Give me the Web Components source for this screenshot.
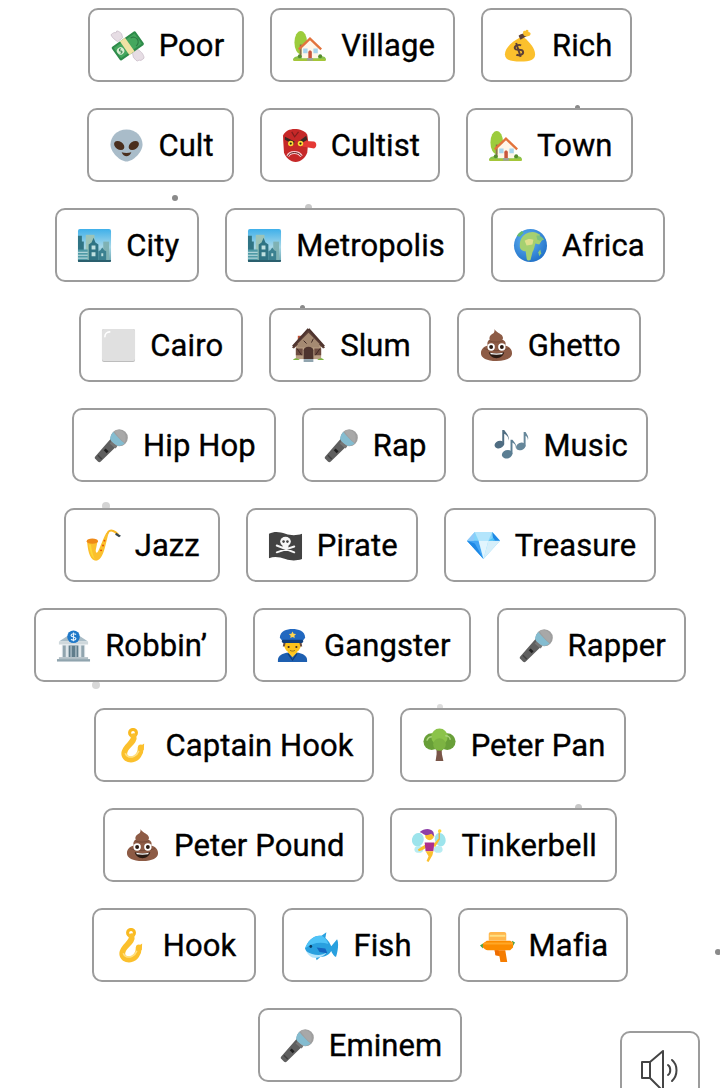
<!DOCTYPE html>
<html lang="en">
<head>
<meta charset="utf-8">
<title>Crafts</title>
<style>
html, body { margin: 0; padding: 0; background: #fff; height: 1088px; overflow: hidden; }
</style>
</head>
<body>
<craft-board>
  <craft-dot x="175" y="198" size="6" tone="#8a8a8a"></craft-dot>
  <craft-dot x="577" y="107" size="5" tone="#8a8a8a"></craft-dot>
  <craft-dot x="308" y="207" size="7" tone="#c8c8c8"></craft-dot>
  <craft-dot x="302" y="307" size="5" tone="#8a8a8a"></craft-dot>
  <craft-dot x="106" y="506" size="8" tone="#d4d4d4"></craft-dot>
  <craft-dot x="96" y="685" size="8" tone="#d8d8d8"></craft-dot>
  <craft-dot x="440" y="707" size="6" tone="#dcdcdc"></craft-dot>
  <craft-dot x="578" y="807" size="7" tone="#c8c8c8"></craft-dot>
  <craft-dot x="718" y="952" size="6" tone="#8a8a8a"></craft-dot>

  <craft-row>
    <craft-chip icon="money">Poor</craft-chip>
    <craft-chip icon="house">Village</craft-chip>
    <craft-chip icon="bag">Rich</craft-chip>
  </craft-row>
  <craft-row>
    <craft-chip icon="alien">Cult</craft-chip>
    <craft-chip icon="goblin">Cultist</craft-chip>
    <craft-chip icon="house">Town</craft-chip>
  </craft-row>
  <craft-row>
    <craft-chip icon="city">City</craft-chip>
    <craft-chip icon="city">Metropolis</craft-chip>
    <craft-chip icon="globe">Africa</craft-chip>
  </craft-row>
  <craft-row>
    <craft-chip icon="square">Cairo</craft-chip>
    <craft-chip icon="derelict">Slum</craft-chip>
    <craft-chip icon="poop">Ghetto</craft-chip>
  </craft-row>
  <craft-row>
    <craft-chip icon="mic">Hip Hop</craft-chip>
    <craft-chip icon="mic">Rap</craft-chip>
    <craft-chip icon="notes">Music</craft-chip>
  </craft-row>
  <craft-row>
    <craft-chip icon="sax">Jazz</craft-chip>
    <craft-chip icon="flag">Pirate</craft-chip>
    <craft-chip icon="gem">Treasure</craft-chip>
  </craft-row>
  <craft-row>
    <craft-chip icon="bank">Robbin’</craft-chip>
    <craft-chip icon="officer">Gangster</craft-chip>
    <craft-chip icon="mic">Rapper</craft-chip>
  </craft-row>
  <craft-row>
    <craft-chip icon="hook">Captain Hook</craft-chip>
    <craft-chip icon="tree">Peter Pan</craft-chip>
  </craft-row>
  <craft-row>
    <craft-chip icon="poop">Peter Pound</craft-chip>
    <craft-chip icon="fairy">Tinkerbell</craft-chip>
  </craft-row>
  <craft-row>
    <craft-chip icon="hook">Hook</craft-chip>
    <craft-chip icon="fish">Fish</craft-chip>
    <craft-chip icon="pistol">Mafia</craft-chip>
  </craft-row>
  <craft-row>
    <craft-chip icon="mic">Eminem</craft-chip>
  </craft-row>

  <sound-button></sound-button>
</craft-board>

<script>
// all emoji drawn on a 36x36 box
const ICONS = {
  money: `
    <g fill="#e6dde4" stroke="#c4b6c2" stroke-width=".7">
      <path d="M1 7c2-2 4-3 5-2l1-2c2 0 4 2 5 3l1 4-5 4C6 13 2 10 1 7z"/>
      <path d="M35 31c-2 2-4 3-5 2l-2 1c-2-1-3-3-4-4l-1-5 5-3c3 1 7 5 7 9z"/>
    </g>
    <g transform="rotate(-35 18 18)">
      <rect x="3" y="10" width="30" height="17" rx="1.500" fill="#2e8b4a"/>
      <rect x="5" y="12" width="26" height="13" fill="#45a75e"/>
      <rect x="14" y="10" width="6.500" height="17" fill="#f1e2a4"/>
      <circle cx="9" cy="18.500" r="3.800" fill="#d7ecd0"/>
      <path d="M10.500 16.800c-2-1-3 1-1.500 1.800s.5 2.800-1.500 1.800" fill="none" stroke="#2e7d46" stroke-width="1"/>
      <path d="M25 13.500a5 5 0 0 1 0 10" fill="none" stroke="#2e7d46" stroke-width="1.200"/>
    </g>`,
  house: `
    <ellipse cx="9" cy="15" rx="6.500" ry="12" fill="#9ccc3c"/>
    <path d="M8 17h2v12H8z" fill="#8d6e4f"/>
    <path d="M1 33c0-3 3-4 6-4h23c3 0 5 1 5 4z" fill="#8bc34a"/>
    <path d="M2 34c-1 0-1-1 0-2h32c1 1 1 2 0 2z" fill="#a4c639"/>
    <path d="M10 20l8.500-8L27 20v11H10z" fill="#fff6e8"/>
    <path d="M7 22l11.500-11L30 22" fill="none" stroke="#e2733c" stroke-width="2.400"/>
    <path d="M11.500 21h4.500v5h-4.500zM22 21h4.500v5H22z" fill="#a6d4ee"/>
    <path d="M16.800 31v-6c0-2.600 3.600-2.600 3.600 0v6z" fill="#c8553d"/>
    <path d="M15.500 31h6v2.500h-6z" fill="#9e9e9e"/>
    <circle cx="8" cy="29" r="2" fill="#558b2f"/><circle cx="29" cy="29" r="2" fill="#558b2f"/>`,
  bag: `
    <path d="M17 10C9 14 2 21 2 27c0 6 6 7.500 16 7.500S33 33 33 27c0-6-6-13-11-17z" fill="#fbc02d"/>
    <path d="M16 8c2-2 6-2.500 8-3l1 3-7 4z" fill="#5d4037"/>
    <path d="M21 7c-1-3 0-5 2-4 1-2 4-1 3 1 3 0 3 3 1 4-2 1-5 1-6-1z" fill="#fbc02d"/>
    <g transform="rotate(-18 16 23)" fill="none" stroke="#5d4037" stroke-width="2">
      <path d="M20 19c-1.500-2-7-2-7 1s7 2 7 5.500-6 3-7.500 1"/><path d="M16 15v15"/>
    </g>`,
  alien: `
    <path d="M18 1.500C8 1.500 1.500 9 1.500 17c0 8 10 17.500 16.500 17.500S34.500 25 34.500 17C34.500 9 28 1.500 18 1.500z" fill="#a9bcc9"/>
    <ellipse cx="10.500" cy="18" rx="5.800" ry="4" transform="rotate(35 10.500 18)" fill="#4a2f1e"/>
    <ellipse cx="25.500" cy="18" rx="5.800" ry="4" transform="rotate(-35 25.500 18)" fill="#4a2f1e"/>
    <path d="M13 25c3 1 7 1 10 0-1 3-3 4-5 4s-4-1-5-4z" fill="#4a2f1e"/>`,
  goblin: `
    <path d="M1 8C3 3 8 1 13 1s11 2 13 6l1 7-1 11c-1 5-7 10-12 10S3 30 2 25z" fill="#c62828"/>
    <path d="M19 13l14 1c3 1 3 6 0 7l-12-2z" fill="#e53935"/>
    <path d="M3 9l10 5-1 3-9-5zM25 8l-8 6 1 3 8-5z" fill="#3e2723"/>
    <circle cx="9" cy="16" r="2.800" fill="#fdd835"/><circle cx="19" cy="16" r="2.800" fill="#fdd835"/>
    <circle cx="9" cy="16" r="1.100" fill="#212121"/><circle cx="19" cy="16" r="1.100" fill="#212121"/>
    <path d="M6 29c2-5 11-5 14 0" fill="none" stroke="#ffcdd2" stroke-width="3"/>
    <path d="M6 29c2-5 11-5 14 0" fill="none" stroke="#4e1510" stroke-width="1"/>
    <path d="M10 4l3 5 4-5" fill="none" stroke="#7f1d1d" stroke-width="1.200"/>`,
  city: `
    <defs><linearGradient id="sky" x1="0" y1="0" x2="0" y2="1">
      <stop offset="0" stop-color="#3fb0ea"/><stop offset=".55" stop-color="#a8d8e8"/><stop offset="1" stop-color="#6aa5b0"/>
    </linearGradient></defs>
    <rect x="1" y="1" width="34" height="34" rx="2" fill="url(#sky)"/>
    <path d="M9 7h9v27H9z" fill="#9cc4b8"/>
    <path d="M27 14h6v20h-6z" fill="#7fb2b4"/>
    <path d="M1 8h4v6h2v21H2a1 1 0 0 1-1-1z" fill="#2f7484"/>
    <path d="M1 22h10v13H2a1 1 0 0 1-1-1z" fill="#4f9aa6"/>
    <path d="M1 25h10M1 28h10M1 31h10" stroke="#c8e4e6" stroke-width="1"/>
    <path d="M12 35V17l3-2 2-5 2 5 3 2v18z" fill="#2f7484"/>
    <path d="M15 18h4v4h-4zM15 25h4v4h-4z" fill="#bfe0e0"/>
    <path d="M22 35V24l2-1 2-3 2 3 2 1v11z" fill="#3b8090"/>
    <path d="M25 26h2v3h-2z" fill="#bfe0e0"/>
    <path d="M1 33h34v1a1 1 0 0 1-1 1H2a1 1 0 0 1-1-1z" fill="#2a5f6e"/>`,
  globe: `
    <defs><radialGradient id="sea" cx=".4" cy=".35" r=".8">
      <stop offset="0" stop-color="#64b5f6"/><stop offset="1" stop-color="#1565c0"/>
    </radialGradient></defs>
    <circle cx="18" cy="18" r="17" fill="url(#sea)"/>
    <path d="M8 12c2-5 7-8 12-8 3 0 5 1 8 3l-2 3 4 2-3 5-4-1c-1 3-1 6-3 9l-2 8c-2 1-4 0-4-2l-1-7c-3 0-6-2-6-5s0-5 1-7z" fill="#a5d070"/>
    <path d="M12 13c3-2 6-2 9-1l-1 5-6 1z" fill="#e0df8c"/>
    <path d="M4 8c1-2 3-4 5-5l2 2-4 4z" fill="#66bb6a"/>
    <path d="M24 8c3-1 6 1 8 4l-4 1-3-1z" fill="#7cc27e"/>
    <path d="M26 25l2-3 1 4-2 3z" fill="#8cc97a"/>`,
  square: `
    <rect x="1" y="1" width="34" height="34" rx="2" fill="#bdbdbd"/>
    <rect x="1" y="1" width="34" height="33" rx="2" fill="#e0e0e0"/>
    <path d="M4 9c0-3 2-5 5-5" fill="none" stroke="#fff" stroke-width="1.600" stroke-linecap="round"/>`,
  derelict: `
    <path d="M7 8h4v7H7z" fill="#c0553a"/>
    <path d="M5 16h26v16H5z" fill="#b99e84"/>
    <path d="M18 2L1 20l2 1L18 7l15 14 2-1z" fill="#5d4037"/>
    <path d="M18 5L7 16v4h22v-4z" fill="#a58a72"/>
    <path d="M18 1L2 19M18 1l16 18" stroke="#4e342e" stroke-width="2.400" fill="none"/>
    <path d="M13 32v-9c0-5 10-5 10 0v9z" fill="#4e342e"/>
    <path d="M5 21h7v7H5zM24 21h7v7h-7z" fill="#6d4c41"/>
    <path d="M6 21l5 7M30 21l-5 7M13 13l3 3M23 11l-2 4" stroke="#3e2723" stroke-width="1"/>
    <path d="M2 33c2-3 5-2 7 0zM27 33c2-2 5-3 7 0z" fill="#7cb342"/>
    <path d="M13 32h10v3H13z" fill="#90a4ae"/>`,
  poop: `
    <path d="M16 1c1 3 5 4 7 6 2 2 2 4 1 5 3 1 4 3 3 6 4 1 7 4 7 8 0 5-6 8-16 8S2 31 2 26c0-4 3-7 7-8-1-3 0-5 2-6-1-3 1-5 3-6 2-1 2-3 2-5z" fill="#8d5b45"/>
    <path d="M10 13c4 2 11 2 15 0M5 21c6 3 19 3 26 0" fill="none" stroke="#6f4533" stroke-width=".8"/>
    <circle cx="12.500" cy="19.500" r="3.800" fill="#fff"/><circle cx="23.500" cy="19.500" r="3.800" fill="#fff"/>
    <circle cx="12.500" cy="19.500" r="2" fill="#2a1a12"/><circle cx="23.500" cy="19.500" r="2" fill="#2a1a12"/>
    <path d="M10 25c5 1.500 11 1.500 16 0-1 4-4 6-8 6s-7-2-8-6z" fill="#2a1a12"/>
    <path d="M11.500 25.500c4 .8 9 .8 13 0l-.6 1.500c-4 .6-8 .6-11.800 0z" fill="#fff"/>`,
  mic: `
    <path d="M19 9l7 7L7 34.500c-1 1-2 1-3 0l-2.500-2.500c-1-1-1-2 0-3z" fill="#5f5f5f"/>
    <path d="M4 28l4 4" stroke="#424242" stroke-width="1.500"/>
    <path d="M12 21l3 3-2 2-3-3z" fill="#212121"/>
    <circle cx="26" cy="10" r="8.800" fill="#9e9e9e"/>
    <path d="M16.500 11c0-2 2-6 3.500-7 3 4 7 8 11.500 12-2 1.500-4 2.500-6.500 2.500l-2-1c-3-1-5.500-3.500-6.500-6.500z" fill="#84bcd0"/>
    <path d="M21 3c3-2 8-1 10 2s2 7 .5 10c-4-3-7.500-7.500-10.500-12z" fill="#a8a8a8"/>
    <path d="M18 14l6 5-2 2-6-5z" fill="#757575"/>`,
  notes: `
    <g fill="#4f6d82">
      <ellipse cx="5.500" cy="17" rx="5" ry="3.800" transform="rotate(-20 5.500 17)"/>
      <path d="M8.500 17h2V6c2 1 5 3 4 7 2-4-1-7-4-11h-2z"/>
    </g>
    <g fill="#5b7e93">
      <ellipse cx="13.500" cy="27" rx="5.500" ry="4.300" transform="rotate(-20 13.500 27)"/>
      <path d="M17 27h2V15c2 1 4 3 3 6 2-4-1-6-3-9h-2z"/>
    </g>
    <g fill="#66879a">
      <ellipse cx="27.500" cy="19" rx="5" ry="3.800" transform="rotate(-20 27.500 19)"/>
      <path d="M30.500 19h2V8c1 1 3 2 2 5 2-4-.5-6-2-9h-2z"/>
    </g>`,
  sax: `
    <path d="M1 13C2 22 3 31 9 33.500 15 35 18 26 20 18L23 6l-2-1C18 10 15 19 12.500 24c-1 2-2.500 2-2.500-1L12 13z" fill="#fbc02d"/>
    <path d="M3 17c1 6 2 12 6 15-2-4-3-9-4-15z" fill="#fdd835"/>
    <ellipse cx="6.500" cy="13.500" rx="5.800" ry="2.600" fill="#ef8a17"/>
    <path d="M22 6c1-3 3-4 6-3s4 3 5 4" fill="none" stroke="#f9b825" stroke-width="2.200"/>
    <path d="M31 5l5 3-2 1.500-4-2.500z" fill="#37474f"/>
    <circle cx="19" cy="13" r="1" fill="#e65100"/><circle cx="17.500" cy="18" r="1" fill="#e65100"/><circle cx="15.500" cy="23" r="1" fill="#e65100"/>`,
  flag: `
    <path d="M1 6c6-3 11-2 17 0s11 2 17 0v26c-6 2-11 2-17 0S7 29 1 31z" fill="#424242"/>
    <path d="M9 25l18-6M9 18l18 7" stroke="#f5f5f5" stroke-width="2" stroke-linecap="round"/>
    <ellipse cx="18" cy="14" rx="5.500" ry="5" fill="#f5f5f5"/>
    <rect x="15" y="17" width="6" height="4.500" rx="1" fill="#f5f5f5"/>
    <circle cx="16" cy="14" r="1.300" fill="#424242"/><circle cx="20" cy="14" r="1.300" fill="#424242"/>`,
  gem: `
    <path d="M9 4h18l8 9-17 19L1 13z" fill="#81d4fa"/>
    <path d="M9 4h18l-4 9H13z" fill="#b3e5fc"/>
    <path d="M1 13l12 0 5 19z" fill="#42a5f5"/>
    <path d="M35 13H23l-5 19z" fill="#d6effa"/>
    <path d="M13 13h10l-5 19z" fill="#e1f5fe"/>
    <path d="M27 4l8 9H28z" fill="#1e88e5"/>
    <path d="M9 4L1 13h7z" fill="#90caf9"/>
    <path d="M1 13l8 3 9 16z" fill="#1e88e5"/>
    <path d="M23 13l5-3 2 3z" fill="#4fc3f7"/>`,
  bank: `
    <path d="M18 4L3 14h30z" fill="#a9bcc6"/>
    <rect x="3" y="14" width="30" height="3" fill="#cfd8dc"/>
    <circle cx="18" cy="9" r="6.500" fill="#1e78c8"/>
    <path d="M20.500 6.800c-1-1.300-5-1.300-5 .8s5 1.300 5 3.300-4 2-5 .6M18 4.500v9" fill="none" stroke="#e3f2fd" stroke-width="1.200"/>
    <rect x="6" y="17" width="24" height="13" fill="#dfe6ea"/>
    <path d="M7 18h3v12H7zM26 18h3v12h-3z" fill="#90a4ae"/>
    <path d="M13 18h10v12H13z" fill="#607d8b"/>
    <path d="M15.500 18v12M20.500 18v12" stroke="#a9bcc6" stroke-width="1.500"/>
    <rect x="3" y="30" width="30" height="2" fill="#b0bec5"/><rect x="1" y="32" width="34" height="2.500" fill="#90a4ae"/>`,
  officer: `
    <path d="M3 35v-2c0-5 6-8 15-8s15 3 15 8v2z" fill="#1e5fb0"/>
    <path d="M13 25l5 5 5-5-2-2h-6z" fill="#ffca28"/>
    <path d="M14 26l4 6 4-6 1 1-5 7-5-7z" fill="#103f7c"/>
    <path d="M9 15c0 7 4 11 9 11s9-4 9-11z" fill="#fcc21b"/>
    <path d="M9 14l-1 5h2l1-4zM27 14l1 5h-2l-1-4z" fill="#6d4c41"/>
    <path d="M5 10C5 3 12 1 18 1s13 2 13 9l-3 4H8z" fill="#2168c0"/>
    <rect x="7" y="12" width="22" height="3.500" rx="1.500" fill="#103f7c"/>
    <path d="M18 3.500l1.200 2.300 2.500.3-1.800 1.800.4 2.500-2.300-1.200-2.300 1.200.4-2.500-1.800-1.800 2.500-.3z" fill="#ffd54f"/>
    <circle cx="14" cy="19.500" r="1.100" fill="#3e2723"/><circle cx="22" cy="19.500" r="1.100" fill="#3e2723"/>
    <path d="M15.500 23c1.500 1 3.500 1 5 0" fill="none" stroke="#8d6e1f" stroke-width="1"/>`,
  hook: `
    <circle cx="17.500" cy="5" r="3.500" fill="none" stroke="#f9b91f" stroke-width="3.200"/>
    <path d="M18 8.500C20 15 9 18 8.500 26c-.3 4.500 4 7 8.500 6.300 5-.8 8.500-6 8.500-12.300" fill="none" stroke="#fbc02d" stroke-width="6" stroke-linecap="round"/>
    <path d="M22 20.500l7-4.500-.5 7z" fill="#fbc02d"/>
    <path d="M9.500 26c1 3.500 5 5 9 3 2-1 4-3 5-5.500" fill="none" stroke="#ffe082" stroke-width="1.600"/>`,
  tree: `
    <path d="M15 18h5l.5 9 1.500 7h-8l1-7z" fill="#795548"/>
    <path d="M17.500 24l-6-6M18 24l6-6" stroke="#795548" stroke-width="1.600"/>
    <circle cx="10" cy="14" r="8.500" fill="#689f38"/>
    <circle cx="26" cy="14" r="8.500" fill="#689f38"/>
    <circle cx="18" cy="9" r="8.500" fill="#8bc34a"/>
    <circle cx="18" cy="17" r="6.500" fill="#7cb342"/>
    <path d="M5 13c1-3 3-4 5-4M24 8c3 0 5 2 5 4" fill="none" stroke="#aed581" stroke-width="1.500"/>`,
  fairy: `
    <ellipse cx="6" cy="12" rx="6" ry="7" transform="rotate(15 6 12)" fill="#9de4ec"/>
    <ellipse cx="29" cy="12" rx="5.500" ry="7" transform="rotate(-15 29 12)" fill="#9de4ec"/>
    <ellipse cx="7" cy="22" rx="4.500" ry="3.500" fill="#b7ecf2"/><ellipse cx="27" cy="22" rx="4.500" ry="3.500" fill="#b7ecf2"/>
    <path d="M14 17c-4 2-6 4-8 5l1 2c4-1 6-3 8-4zM22 17l5-6 1.500 1-5 8z" fill="#fbc02d"/>
    <path d="M28 3v9" stroke="#f9a825" stroke-width="1.200"/><circle cx="28.500" cy="3" r="1.800" fill="#fdd835"/>
    <circle cx="18" cy="8" r="4.500" fill="#fbc02d"/>
    <path d="M8 4c4-3 10-5 14 0l1 5-3-3c-3 1-5 2-7 1 0 0-3-2-5-3z" fill="#8e3fa8"/>
    <path d="M13 15h10l-1 9h-8z" fill="#ab2f8e"/>
    <path d="M14 24h8l-1 4-4 7-2-1 2-5z" fill="#fbc02d"/>`,
  fish: `
    <g transform="translate(0 -4) scale(1 1.200)">
      <path d="M1 21c3-7 9-12 17-11l5-3-1 5c3 2 5 5 6 7l6-6c2 3 1 10-1 15-2 0-4-3-5-5-2 3-6 5-11 5l-4 3-1-3c-5 0-9-3-11-7z" fill="#29a0df"/>
      <path d="M1 21c3-7 9-12 17-11 3 1 6 4 7 7-8-2-17-1-24 4z" fill="#4fc3f7"/>
      <path d="M2 23c7 4 16 5 22 1-4 4-9 5-12 5-5 0-8-3-10-6z" fill="#b3e5fc"/>
      <path d="M13 20l9 1 2 4-8-1z" fill="#1565c0"/>
      <circle cx="7" cy="19" r="1.400" fill="#0d3c61"/>
    </g>`,
  pistol: `
    <path d="M0 18l3-2v5zM36 15l-3-2v7z" fill="#43a047"/>
    <path d="M3 16l4-3h24l3 2v5l-3 3H8c-2 0-4-2-5-3z" fill="#fb8c00"/>
    <path d="M9 6c0-1 1-2 2-2h14c1 0 2 1 2 2v7H9z" fill="#ffb74d"/>
    <path d="M10 7h16v2H10z" fill="#ffe082"/>
    <path d="M3 16l2-1h29v2H4z" fill="#ffa726"/>
    <path d="M15 23h11l2 12h-7l-1-6-4-1z" fill="#f57c00"/>
    <path d="M15 23h4l1 5-4 0z" fill="#ef6c00"/>`
};

class CraftBoard extends HTMLElement {
  constructor() {
    super();
    this.attachShadow({mode: 'open'});
    this.shadowRoot.innerHTML = `
      <style>
      :host { display: flex; flex-direction: column; gap: 26px; padding-top: 8px; position: relative; height: 1080px; overflow: hidden;
              font-family: Roboto, "Liberation Sans", sans-serif; color: #000; }
      </style>
      <slot></slot>`;
  }
}

class CraftRow extends HTMLElement {
  constructor() {
    super();
    this.attachShadow({mode: 'open'});
    this.shadowRoot.innerHTML = `
      <style>
      :host { display: flex; justify-content: center; gap: 26px; position: relative; z-index: 1; }
      </style>
      <slot></slot>`;
  }
}

class CraftChip extends HTMLElement {
  constructor() {
    super();
    this.attachShadow({mode: 'open'});
    const art = ICONS[this.getAttribute('icon')] || '';
    this.shadowRoot.innerHTML = `
      <style>
      :host { display: inline-flex; align-items: center; box-sizing: border-box; height: 74px; padding: 0 18px 0 20px;
              border: 2px solid #9c9c9c; border-radius: 10px; background: #fff;
              font-size: 31px; letter-spacing: .1px; -webkit-text-stroke: .35px #000; }
      svg { width: 35px; height: 35px; margin-right: 14px; flex: none; display: block; }
      </style>
      <svg viewBox="0 0 36 36" aria-hidden="true">${art}</svg>
      <slot></slot>`;
  }
}

class CraftDot extends HTMLElement {
  constructor() {
    super();
    this.attachShadow({mode: 'open'});
    const size = +this.getAttribute('size');
    this.shadowRoot.innerHTML = `
      <style>
      :host { display: block; position: absolute; border-radius: 50%;
              left: ${this.getAttribute('x') - size / 2}px; top: ${this.getAttribute('y') - size / 2}px;
              width: ${size}px; height: ${size}px; background: ${this.getAttribute('tone')}; }
      </style>`;
  }
}

class SoundButton extends HTMLElement {
  constructor() {
    super();
    this.attachShadow({mode: 'open'});
    this.shadowRoot.innerHTML = `
      <style>
      :host { display: block; box-sizing: border-box; position: absolute; left: 620px; top: 1031px; width: 80px; height: 80px;
              border: 2px solid #9c9c9c; border-radius: 10px; background: #fff; z-index: 2; }
      svg { display: block; width: 44px; height: 44px; margin: 16px 0 0 16px; }
      </style>
      <svg viewBox="0 0 44 44" fill="none" stroke="#444" stroke-width="2" stroke-linejoin="round" stroke-linecap="round">
        <path d="M4 13h8v16H4zM12 13L25 2v40L12 29"/>
        <path d="M30 16c3 2 3 8 0 10"/>
        <path d="M34 11c6 5 6 15 0 21"/>
      </svg>`;
  }
}

customElements.define('craft-board', CraftBoard);
customElements.define('craft-row', CraftRow);
customElements.define('craft-chip', CraftChip);
customElements.define('craft-dot', CraftDot);
customElements.define('sound-button', SoundButton);
</script>
</body>
</html>
